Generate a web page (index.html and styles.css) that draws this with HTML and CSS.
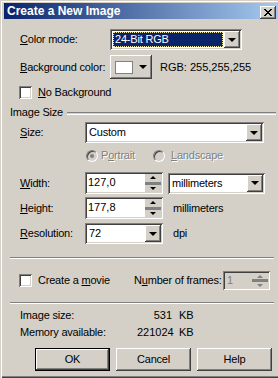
FILE: index.html
```html
<!DOCTYPE html>
<html lang="en">

<head>
    <meta charset="UTF-8">
    <meta name="viewport" content="width=device-width, initial-scale=1.0">
    <title>Create a New Image</title>
    <link rel="stylesheet" href="styles.css">
</head>

<body>

    <div class="window">
        <div class="caption">
            <span class="caption-title">Create a New Image</span>
            <div class="close-btn raised">
                <svg width="8" height="7" viewBox="0 0 8 7">
                    <path d="M0 0h2v1H0zM6 0h2v1H6zM1 1h2v1H1zM5 1h2v1H5zM2 2h4v1H2zM3 3h2v1H3zM2 4h4v1H2zM1 5h2v1H1zM5 5h2v1H5zM0 6h2v1H0zM6 6h2v1H6z" fill="#000" />
                </svg>
            </div>
        </div>

        <!-- color mode -->
        <div class="row mode-row">
            <span class="label label-wide"><u>C</u>olor mode:</span>
            <div class="combo sunken mode-combo">
                <div class="combo-field"><span class="selected">24-Bit RGB</span></div>
                <div class="drop-btn raised"><i class="arrow"></i></div>
            </div>
        </div>

        <div class="row bg-row">
            <span class="label label-wide"><u>B</u>ackground color:</span>
            <div class="color-btn raised">
                <span class="swatch"></span>
                <i class="arrow"></i>
            </div>
            <span class="rgb">RGB: 255,255,255</span>
        </div>

        <div class="row check-row">
            <span class="checkbox"></span>
            <span class="check-text"><u>N</u>o Background</span>
        </div>

        <!-- image size group -->
        <div class="row group-row">
            <span class="group-title">Image Size</span>
            <span class="group-line"></span>
        </div>

        <div class="row size-row">
            <span class="label"><u>S</u>ize:</span>
            <div class="combo sunken size-combo">
                <div class="combo-field">Custom</div>
                <div class="drop-btn raised"><i class="arrow"></i></div>
            </div>
        </div>

        <div class="row radio-row">
            <span class="radio checked"><i></i></span>
            <span class="disabled-text portrait-text">P<u>o</u>rtrait</span>
            <span class="radio"></span>
            <span class="disabled-text landscape-text"><u>L</u>andscape</span>
        </div>

        <div class="row field-row width-row">
            <span class="label"><u>W</u>idth:</span>
            <div class="spin-box sunken">
                <div class="spin-field">127,0</div>
                <div class="spinner">
                    <div class="spin-up"><i class="up-arrow"></i></div>
                    <div class="spin-mid"></div>
                    <div class="spin-down"><i class="down-arrow"></i></div>
                </div>
            </div>
            <div class="combo sunken unit-combo">
                <div class="combo-field">millimeters</div>
                <div class="drop-btn raised"><i class="arrow"></i></div>
            </div>
        </div>

        <div class="row field-row height-row">
            <span class="label"><u>H</u>eight:</span>
            <div class="spin-box sunken">
                <div class="spin-field">177,8</div>
                <div class="spinner">
                    <div class="spin-up"><i class="up-arrow"></i></div>
                    <div class="spin-mid"></div>
                    <div class="spin-down"><i class="down-arrow"></i></div>
                </div>
            </div>
            <span class="unit">millimeters</span>
        </div>

        <div class="row field-row res-row">
            <span class="label"><u>R</u>esolution:</span>
            <div class="combo sunken res-combo">
                <div class="combo-field">72</div>
                <div class="drop-btn raised"><i class="arrow"></i></div>
            </div>
            <span class="unit">dpi</span>
        </div>

        <div class="separator sep-1"></div>

        <!-- movie -->
        <div class="row movie-row">
            <span class="checkbox"></span>
            <span class="check-text movie-text">Create a <u>m</u>ovie</span>
            <span class="frames-label">N<u>u</u>mber of frames:</span>
            <div class="frames-box sunken">
                <div class="frames-field">1</div>
                <div class="spinner small">
                    <div class="spin-up"><i class="up-arrow"></i></div>
                    <div class="spin-mid"></div>
                    <div class="spin-down"><i class="down-arrow"></i></div>
                </div>
            </div>
        </div>

        <div class="separator sep-2"></div>

        <div class="info">
            <span>Image size:</span>
            <span class="num">531</span>
            <span>KB</span>
            <span>Memory available:</span>
            <span class="num">221024</span>
            <span>KB</span>
        </div>

        <div class="buttons">
            <div class="default-btn"><div class="btn raised">OK</div></div>
            <div class="btn raised">Cancel</div>
            <div class="btn raised">Help</div>
        </div>
    </div>

</body>

</html>
```

FILE: styles.css
```css
body {
    margin: 0;
    width: 278px;
    height: 378px;
    overflow: hidden;
    background-color: #d4d0c8;
    font-family: "Liberation Sans", Arial, sans-serif;
    font-size: 11px;
    letter-spacing: -0.2px;
    color: #000;
}

u {
    text-decoration: underline;
    text-underline-offset: 1px;
}

.window {
    width: 282px;
    height: 378px;
    box-sizing: border-box;
    padding-top: 3px;
    background-color: #d4d0c8;
    box-shadow: inset 1px 1px 0 #d4d0c8, inset 2px 2px 0 #fff, inset -1px -1px 0 #404040, inset -2px -2px 0 #808080;
}

/* 3d borders */
.raised {
    box-shadow: inset -1px -1px 0 #404040, inset 1px 1px 0 #fff, inset -2px -2px 0 #808080, inset 2px 2px 0 #d4d0c8;
}

.sunken {
    box-shadow: inset 1px 1px 0 #808080, inset -1px -1px 0 #fff, inset 2px 2px 0 #404040, inset -2px -2px 0 #d4d0c8;
}

.caption {
    height: 16px;
    margin-left: 4px;
    width: 274px;
    display: flex;
    align-items: center;
    justify-content: space-between;
    background: linear-gradient(to right, #0a246a, #a6caf0);
}

.caption-title {
    padding-left: 3px;
    color: #fff;
    font-weight: bold;
    font-size: 12px;
    letter-spacing: 0;
}

.close-btn {
    width: 16px;
    height: 13px;
    margin-right: 2px;
    margin-top: 3px;
    background-color: #d4d0c8;
    display: flex;
    align-items: center;
    justify-content: center;
}

.close-btn svg {
    display: block;
    margin-top: -1px;
}

.row {
    display: flex;
    align-items: center;
    line-height: 13px;
}

.label {
    width: 65px;
    padding-left: 20px;
}

.label-wide {
    width: 90px;
}

/* combo boxes */
.combo {
    height: 21px;
    box-sizing: border-box;
    padding: 2px;
    background-color: #fff;
    display: flex;
}

.combo-field {
    flex: 1;
    padding-left: 2px;
    line-height: 17px;
}

.drop-btn {
    width: 16px;
    height: 17px;
    background-color: #d4d0c8;
    display: flex;
    align-items: center;
    justify-content: center;
}

.arrow {
    width: 0;
    height: 0;
    border-left: 4px solid transparent;
    border-right: 4px solid transparent;
    border-top: 4px solid #000;
}

.mode-row {
    margin-top: 10px;
}

.mode-combo {
    width: 132px;
}

.mode-combo .combo-field {
    padding: 1px;
}

.selected {
    display: block;
    height: 15px;
    box-sizing: border-box;
    background-color: #0a246a;
    color: #fff;
    line-height: 13px;
    padding-left: 1px;
    border: 1px dotted #f0e6a8;
}

.bg-row {
    margin-top: 5px;
}

.color-btn {
    width: 42px;
    height: 24px;
    box-sizing: border-box;
    padding-left: 5px;
    display: flex;
    align-items: center;
    background-color: #d4d0c8;
}

.swatch {
    width: 18px;
    height: 13px;
    box-sizing: border-box;
    background-color: #fff;
    border: 1px solid #808080;
    margin-right: 6px;
}

.rgb {
    margin-left: 8px;
    letter-spacing: 0;
}

.checkbox {
    width: 13px;
    height: 13px;
    margin-left: 19px;
    background-color: #fff;
    box-shadow: inset 1px 1px 0 #808080, inset -1px -1px 0 #fff, inset 2px 2px 0 #404040, inset -2px -2px 0 #d4d0c8;
}

.check-text {
    margin-left: 6px;
}

.check-row {
    margin-top: 7px;
}

.group-row {
    margin-top: 7px;
}

.group-title {
    padding-left: 10px;
}

.group-line {
    flex: 1;
    margin: 1px 6px 0 4px;
    height: 1px;
    border-top: 1px solid #808080;
    border-bottom: 1px solid #fff;
}

.size-row {
    margin-top: 3px;
}

.size-combo {
    width: 179px;
}

/* orientation radios */
.radio-row {
    margin-top: 6px;
    padding-left: 86px;
}

.radio {
    width: 12px;
    height: 12px;
    box-sizing: border-box;
    border-radius: 50%;
    border: 1px solid;
    border-color: #808080 #fff #fff #808080;
    background-color: #d4d0c8;
    box-shadow: inset 1px 1px 0 #404040;
    display: flex;
    align-items: center;
    justify-content: center;
}

.radio i {
    width: 4px;
    height: 4px;
    border-radius: 50%;
    background-color: #808080;
}

.disabled-text {
    color: #808080;
    text-shadow: 1px 1px 0 #fff;
}

.portrait-text {
    width: 52px;
    margin-left: 3px;
}

.landscape-text {
    margin-left: 6px;
}

/* width / height / resolution */
.width-row {
    margin-top: 10px;
}

.height-row {
    margin-top: 3px;
}

.res-row {
    margin-top: 4px;
}

.spin-box {
    width: 78px;
    height: 22px;
    box-sizing: border-box;
    padding: 2px;
    background-color: #fff;
    display: flex;
}

.spin-field {
    flex: 1;
    padding-left: 1px;
    line-height: 16px;
    letter-spacing: 0;
}

.spinner {
    width: 16px;
    display: flex;
    flex-direction: column;
    background-color: #d4d0c8;
}

.spin-up,
.spin-down {
    flex: 1;
    display: flex;
    align-items: center;
    justify-content: center;
}

.spin-mid {
    height: 3px;
    background-color: #808080;
}

.up-arrow,
.down-arrow {
    width: 0;
    height: 0;
    border-left: 3px solid transparent;
    border-right: 3px solid transparent;
}

.up-arrow {
    border-bottom: 3px solid #000;
}

.down-arrow {
    border-top: 3px solid #000;
}

.unit-combo {
    width: 97px;
    margin-left: 5px;
}

.res-combo {
    width: 78px;
}

.res-combo .combo-field {
    letter-spacing: 0;
}

.unit {
    margin-left: 10px;
}

.separator {
    height: 0;
    margin: 0 8px 0 10px;
    border-top: 1px solid #808080;
    border-bottom: 1px solid #fff;
}

.sep-1 {
    margin-top: 13px;
}

/* movie */
.movie-row {
    margin-top: 12px;
    height: 19px;
}

.movie-text {
    width: 96px;
}

.frames-label {
    width: 89px;
    white-space: nowrap;
}

.frames-box {
    width: 47px;
    height: 19px;
    box-sizing: border-box;
    padding: 2px;
    display: flex;
    background-color: #d4d0c8;
}

.frames-field {
    flex: 1;
    padding-left: 2px;
    line-height: 15px;
    color: #808080;
}

.spinner.small .up-arrow {
    border-bottom-color: #808080;
}

.spinner.small .down-arrow {
    border-top-color: #808080;
}

.sep-2 {
    margin-top: 12px;
}

.info {
    display: grid;
    grid-template-columns: 110px 35px auto;
    column-gap: 7px;
    row-gap: 4px;
    padding-left: 20px;
    margin-top: 5px;
    line-height: 13px;
}

.num {
    text-align: right;
    letter-spacing: 0;
}

/* dialog buttons */
.buttons {
    display: flex;
    gap: 6px;
    margin-top: 9px;
    padding-left: 35px;
}

.btn {
    width: 75px;
    height: 23px;
    box-sizing: border-box;
    line-height: 23px;
    text-align: center;
    background-color: #d4d0c8;
}

.default-btn {
    width: 75px;
    height: 23px;
    box-sizing: border-box;
    border: 1px solid #000;
}

.default-btn .btn {
    width: 73px;
    height: 21px;
    line-height: 21px;
}
```
